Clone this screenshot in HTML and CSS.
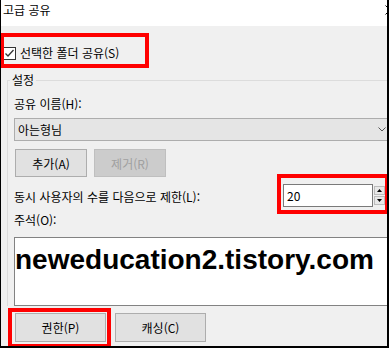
FILE: index.html
```html
<!DOCTYPE html>
<html lang="ko">
<head>
  <meta charset="UTF-8" />
  <title>고급 공유</title>
  <link rel="stylesheet" href="styles.css">
</head>
<body>
  <div class="window">
    <div class="titlebar">
      <span class="title">고급 공유</span>
      <svg class="close" width="10" height="10" viewBox="0 0 10 10"><path d="M0.5 0.5 L9.5 9.5 M9.5 0.5 L0.5 9.5" stroke="#000" stroke-width="1" fill="none"/></svg>
    </div>

    <label class="share-row">
      <svg class="check" width="13" height="13" viewBox="0 0 13 13">
        <rect x="0.5" y="0.5" width="12" height="12" fill="#fff" stroke="#333"/>
        <path d="M2.5 6.5 L5 9 L10.5 3" stroke="#333" stroke-width="1.3" fill="none"/>
      </svg>
      선택한 폴더 공유(S)
    </label>

    <fieldset class="settings">
      <legend>설정</legend>
      <div class="field-label">공유 이름(H):</div>
      <div class="combo">
        <span>아는형님</span>
        <svg class="chevron" width="8" height="5" viewBox="0 0 8 5"><path d="M0.5 0.5 L4 4 L7.5 0.5" stroke="#555" fill="none"/></svg>
      </div>
      <div class="btn-row">
        <button class="btn small">추가(A)</button>
        <button class="btn small disabled">제거(R)</button>
      </div>
      <div class="limit-row">
        <span>동시 사용자의 수를 다음으로 제한(L):</span>
        <div class="spin">
          <div class="spin-input">20</div>
          <div class="spin-btns">
            <div class="spin-btn"><svg width="5" height="3" viewBox="0 0 5 3"><path d="M2.5 0 L5 3 L0 3 Z" fill="#000"/></svg></div>
            <div class="spin-btn"><svg width="5" height="3" viewBox="0 0 5 3"><path d="M0 0 L5 0 L2.5 3 Z" fill="#000"/></svg></div>
          </div>
        </div>
      </div>
      <div class="field-label comment-label">주석(O):</div>
      <div class="comment">neweducation2.tistory.com</div>
    </fieldset>

    <div class="bottom-row">
      <button class="btn wide">권한(P)</button>
      <button class="btn wide">캐싱(C)</button>
    </div>

    <!-- red annotation boxes -->
    <div class="mark mark-share"></div>
    <div class="mark mark-limit"></div>
    <div class="mark mark-perm"></div>
  </div>
</body>
</html>
```

FILE: styles.css
```css
body {
  margin: 0;
  background: #f0f0f0;
  font-family: "Noto Sans CJK KR", "Noto Sans", sans-serif;
  font-size: 12px;
  color: #000;
}

.window {
  position: relative;
  width: 389px;
  height: 348px;
  box-sizing: border-box;
  border-left: 1px solid #000;
  border-right: 2px solid #000;
  border-bottom: 2px solid #000;
  background: #f0f0f0;
  overflow: hidden;
}

.titlebar {
  display: flex;
  align-items: flex-start;
  height: 26px;
  background: #fff;
  padding-left: 2px;
}

.title {
  line-height: 20px;
}

.close {
  margin-left: auto;
  margin-top: 5px;
  margin-right: -8px;
}

.share-row {
  display: flex;
  align-items: center;
  height: 16px;
  line-height: 16px;
  margin-top: 19px;
  padding-left: 2px;
}

.check {
  margin-right: 4px;
}

.settings {
  margin: 11px 0 0 6px;
  padding: 8px 0 0 6px;
  border: 1px solid #dcdcdc;
  border-right: none;
  border-bottom: none;
  min-width: 0;
}

.settings legend {
  padding: 0 2px;
  margin-left: -4px;
  line-height: 16px;
}

.field-label {
  line-height: 16px;
}

.combo {
  display: flex;
  align-items: center;
  height: 23px;
  box-sizing: border-box;
  margin: 6px -8px 0 0;
  padding-left: 3px;
  border: 1px solid #adadad;
  background: #e5e5e5;
}

.chevron {
  margin-left: auto;
  margin-right: 8px;
}

.btn-row {
  display: flex;
  gap: 7px;
  margin: 8px 0 0 1px;
}

.btn {
  font-family: inherit;
  font-size: 12px;
  color: #000;
  background: #e1e1e1;
  border: 1px solid #adadad;
  padding: 0;
}

.btn.small {
  width: 72px;
  height: 28px;
}

.btn.disabled {
  background: #cccccc;
  border-color: #bfbfbf;
  color: #a0a0a0;
}

.limit-row {
  display: flex;
  align-items: center;
  height: 23px;
  margin-top: 7px;
  padding-right: 2px;
}

.limit-row span {
  padding-top: 2px;
}

.spin {
  display: flex;
  margin-left: auto;
  height: 23px;
}

.spin-input {
  width: 90px;
  box-sizing: border-box;
  border: 1px solid #7a7a7a;
  background: #fff;
  padding-left: 3px;
  line-height: 21px;
}

.spin-btns {
  display: flex;
  flex-direction: column;
  justify-content: center;
  gap: 1px;
  padding-left: 1px;
}

.spin-btn {
  display: flex;
  align-items: center;
  justify-content: center;
  width: 11px;
  height: 9px;
  box-sizing: border-box;
  border: 1px solid #bcbcbc;
  background: #e8e8e8;
}

.comment-label {
  margin-top: 5px;
}

.comment {
  height: 69px;
  box-sizing: border-box;
  margin: 9px -8px 0 0;
  padding: 6px 0 0 0;
  border: 1px solid #828282;
  background: #fff;
  font-family: "Liberation Sans", Arial, sans-serif;
  font-weight: bold;
  font-size: 28px;
  line-height: 32px;
}

.bottom-row {
  display: flex;
  gap: 9px;
  margin: 7px 0 0 14px;
}

.btn.wide {
  width: 91px;
  height: 29px;
}

.mark {
  position: absolute;
  box-sizing: border-box;
  border: 4px solid #ff0000;
}

.mark-share {
  left: -1px;
  top: 33px;
  width: 149px;
  height: 35px;
}

.mark-limit {
  left: 276px;
  top: 174px;
  width: 112px;
  height: 40px;
}

.mark-perm {
  left: 7px;
  top: 308px;
  width: 103px;
  height: 40px;
}
```
